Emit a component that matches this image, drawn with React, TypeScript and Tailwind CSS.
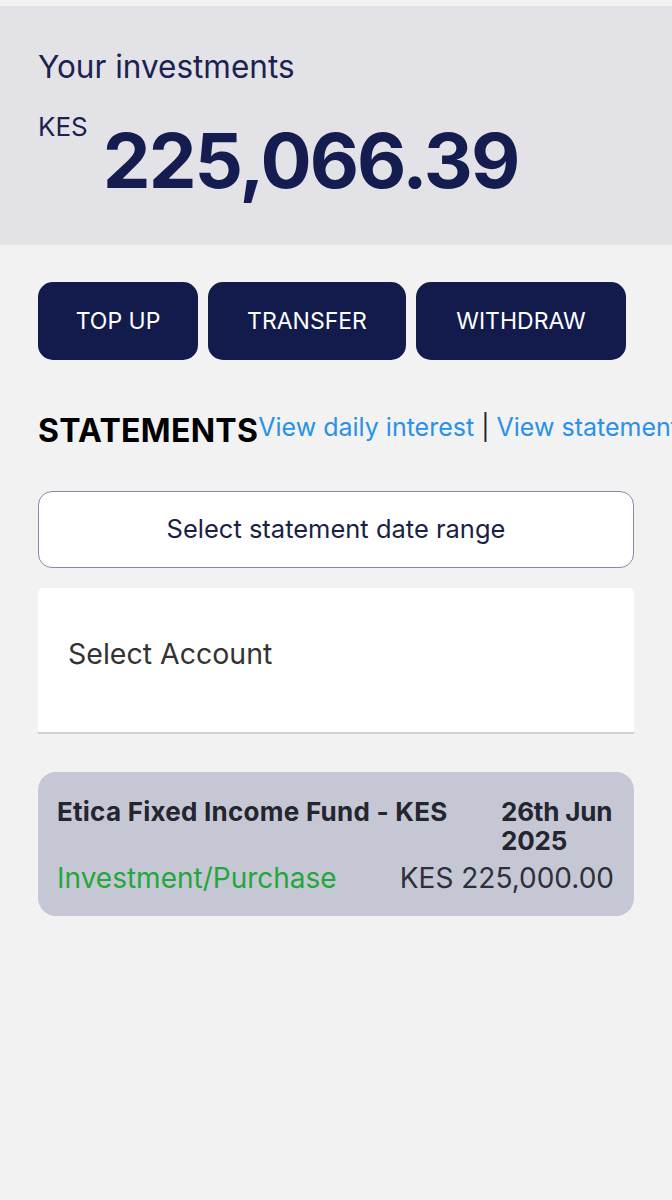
import React from "react";

export default function App() {
  return (
    <div
      className="min-h-screen w-[672px] overflow-hidden bg-[#f2f2f2] pt-[6px]"
      style={{ fontFamily: "Inter, 'Noto Sans', sans-serif" }}
    >
      {/* Header */}
      <div className="h-[239px] bg-[#e2e2e7] px-[38px] pt-[42px]">
        <div className="text-[31.5px] leading-[38px] text-[#1b2250]">Your investments</div>
        <div className="mt-[28px] flex items-start">
          <div className="text-[26px] leading-[26px] text-[#1b2250]">KES</div>
          <div className="ml-[15px] mt-[8px] text-[76px] font-bold leading-[76px] tracking-[-2px] text-[#141c50]">
            225,066.39
          </div>
        </div>
      </div>

      <div className="px-[38px]">
        {/* Buttons */}
        <div className="mt-[37px] flex gap-[10px]">
          <button className="flex h-[78px] w-[160px] items-center justify-center rounded-[15px] bg-[#131b4d] text-[23px] text-white">
            TOP UP
          </button>
          <button className="flex h-[78px] w-[198px] items-center justify-center rounded-[15px] bg-[#131b4d] text-[23px] text-white">
            TRANSFER
          </button>
          <button className="flex h-[78px] w-[210px] items-center justify-center rounded-[15px] bg-[#131b4d] text-[23px] text-white">
            WITHDRAW
          </button>
        </div>

        {/* Statements row */}
        <div className="mt-[55px] flex items-start whitespace-nowrap">
          <div className="text-[32px] font-bold leading-[32px] tracking-[0.3px] text-black">STATEMENTS</div>
          <div className="text-[25px] leading-[25px] text-[#2a90e8]">
            View daily interest <span className="text-[#222]">|</span> View statement
          </div>
        </div>

        {/* Date range */}
        <div className="mt-[44px] flex h-[77px] items-center justify-center rounded-[14px] border-[1.5px] border-[#8a8aa6] bg-white text-[25.5px] text-[#1b1f45]">
          Select statement date range
        </div>

        {/* Select account */}
        <div className="mt-[20px] h-[146px] rounded-t-[5px] border-b-2 border-[#d0d0d4] bg-white pl-[30px] pt-[51px]">
          <div className="text-[28.5px] leading-[29px] text-[#333333]">Select Account</div>
        </div>

        {/* Transaction card */}
        <div className="mt-[38px] h-[144px] rounded-[18px] bg-[#c6c7d4] pl-[19px] pr-[20px] pt-[25px]">
          <div className="flex items-start justify-between">
            <div className="text-[26px] font-bold leading-[29px] tracking-[0.25px] text-[#23252f]">
              Etica Fixed Income Fund - KES
            </div>
            <div className="w-[113px] text-[26px] font-bold leading-[29px] tracking-[-0.2px] text-[#23252f]">
              26th Jun
              <br />
              2025
            </div>
          </div>
          <div className="mt-[6px] flex items-center justify-between">
            <div className="text-[28px] leading-[34px] text-[#22a83a]">Investment/Purchase</div>
            <div className="text-[28px] leading-[34px] text-[#2e2f38]">KES 225,000.00</div>
          </div>
        </div>
      </div>
    </div>
  );
}
